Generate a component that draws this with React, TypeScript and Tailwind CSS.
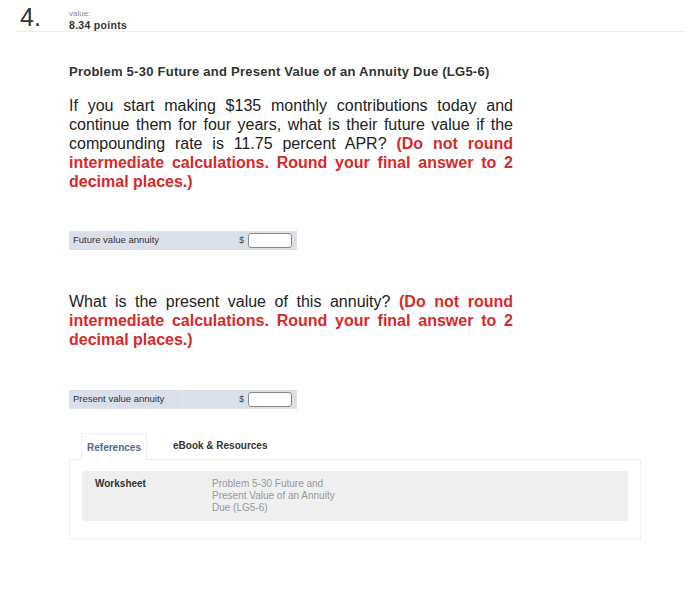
export default function App() {
  return (
    <div className="w-[700px] h-[590px] bg-white text-[#222] font-['Liberation_Sans',Arial,sans-serif]">
      <div className="flex items-start mx-[16px] border-b border-[#eeeeee] h-[32px]">
        <div className="w-[53px] pl-[4px] pt-[5px] text-[25px] leading-[25px] text-[#333]">4.</div>
        <div className="pt-[9px]">
          <div className="text-[8px] leading-[10px] text-[#888]">value:</div>
          <div className="text-[10.5px] leading-[12px] font-bold text-[#333] tracking-[0.3px]">8.34 points</div>
        </div>
      </div>

      <div className="pl-[69px] pt-[32px]">
        <h2 className="text-[13px] leading-[16px] font-bold text-[#333] tracking-[0.25px]">
          Problem 5-30 Future and Present Value of an Annuity Due (LG5-6)
        </h2>

        <p className="mt-[16px] w-[444px] text-[16px] leading-[19px] text-justify text-[#222]">
          If you start making $135 monthly contributions today and continue them for four years, what is their future value if the compounding rate is 11.75 percent APR?{' '}
          <span className="font-bold text-[#d62a2a]">
            (Do not round intermediate calculations. Round your final answer to 2 decimal places.)
          </span>
        </p>

        <div className="mt-[40px] w-[228px] h-[19px] bg-[#dbdfe9] flex items-center">
          <div className="w-[114px] pl-[4px] text-[9.5px] text-[#333]">Future value annuity</div>
          <div className="flex-1 flex items-center justify-end pr-[5px] gap-[4px]">
            <span className="text-[8.5px] text-[#444]">$</span>
            <div className="w-[44px] h-[15px] bg-white border border-[#8a8a8a] rounded-[3px]"></div>
          </div>
        </div>

        <p className="mt-[42px] w-[444px] text-[16px] leading-[19px] text-justify text-[#222]">
          What is the present value of this annuity?{' '}
          <span className="font-bold text-[#d62a2a]">
            (Do not round intermediate calculations. Round your final answer to 2 decimal places.)
          </span>
        </p>

        <div className="mt-[41px] w-[228px] h-[19px] bg-[#dbdfe9] flex items-center">
          <div className="w-[114px] h-full flex items-center pl-[4px] text-[9.5px] text-[#333] border-r border-[#e4e7ef]">Present value annuity</div>
          <div className="flex-1 flex items-center justify-end pr-[5px] gap-[4px]">
            <span className="text-[8.5px] text-[#444]">$</span>
            <div className="w-[44px] h-[15px] bg-white border border-[#8a8a8a] rounded-[3px]"></div>
          </div>
        </div>

        <div className="mt-[23px] w-[572px]">
          <div className="flex pl-[12px] h-[27px]">
            <div className="w-[66px] flex items-center justify-center border border-b-0 border-[#eeeeee] text-[10px] font-bold text-[#4d6a96] relative top-[1px] bg-white">References</div>
            <div className="pl-[26px] flex items-center text-[10px] font-bold text-[#333]">eBook &amp; Resources</div>
          </div>
          <div className="border border-[#eeeeee] h-[80px] px-[12px] pt-[11px]">
            <div className="bg-[#efefef] h-[50px] flex pl-[13px] pt-[7px]">
              <div className="w-[117px] text-[10px] font-bold text-[#333] leading-[12px]">Worksheet</div>
              <div className="w-[135px] text-[10px] leading-[12px] text-[#999]">
                Problem 5-30 Future and Present Value of an Annuity Due (LG5-6)
              </div>
            </div>
          </div>
        </div>
      </div>
    </div>
  );
}
